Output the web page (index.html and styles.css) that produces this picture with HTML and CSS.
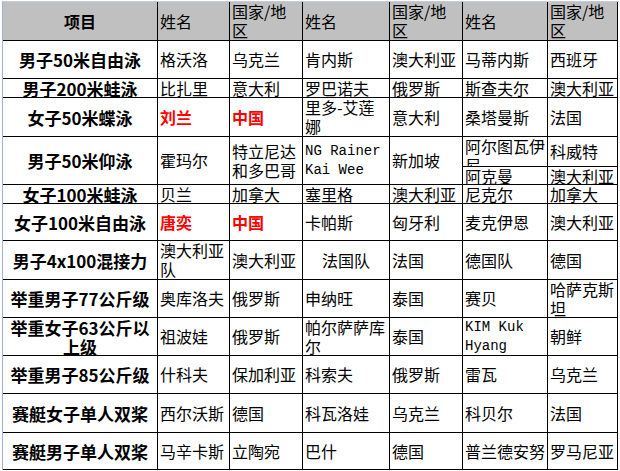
FILE: index.html
```html
<!DOCTYPE html>
<html lang="zh">
<head>
<meta charset="utf-8">
<title>奥运项目</title>
<link rel="stylesheet" href="styles.css">
</head>
<body>
<div class="sheet">
  <div class="grid">
    <div class="c hd ev">项目</div>
    <div class="c hd">姓名</div>
    <div class="c hd">国家/地区</div>
    <div class="c hd">姓名</div>
    <div class="c hd">国家/地区</div>
    <div class="c hd">姓名</div>
    <div class="c hd">国家/地区</div>

    <div class="c ev">男子50米自由泳</div>
    <div class="c">格沃洛</div>
    <div class="c">乌克兰</div>
    <div class="c">肯内斯</div>
    <div class="c">澳大利亚</div>
    <div class="c">马蒂内斯</div>
    <div class="c">西班牙</div>

    <div class="c ev">男子200米蛙泳</div>
    <div class="c">比扎里</div>
    <div class="c">意大利</div>
    <div class="c">罗巴诺夫</div>
    <div class="c">俄罗斯</div>
    <div class="c">斯查夫尔</div>
    <div class="c">澳大利亚</div>

    <div class="c ev">女子50米蝶泳</div>
    <div class="c red">刘兰</div>
    <div class="c red">中国</div>
    <div class="c">里多-艾莲娜</div>
    <div class="c">意大利</div>
    <div class="c">桑塔曼斯</div>
    <div class="c">法国</div>

    <div class="c ev span2">男子50米仰泳</div>
    <div class="c span2">霍玛尔</div>
    <div class="c span2">特立尼达和多巴哥</div>
    <div class="c span2 mono">NG Rainer Kai Wee</div>
    <div class="c span2">新加坡</div>
    <div class="c">阿尔图瓦伊尼</div>
    <div class="c">科威特</div>
    <div class="c">阿克曼</div>
    <div class="c">澳大利亚</div>

    <div class="c ev">女子100米蛙泳</div>
    <div class="c">贝兰</div>
    <div class="c">加拿大</div>
    <div class="c">塞里格</div>
    <div class="c">澳大利亚</div>
    <div class="c">尼克尔</div>
    <div class="c">加拿大</div>

    <div class="c ev">女子100米自由泳</div>
    <div class="c red">唐奕</div>
    <div class="c red">中国</div>
    <div class="c">卡帕斯</div>
    <div class="c">匈牙利</div>
    <div class="c">麦克伊恩</div>
    <div class="c">澳大利亚</div>

    <div class="c ev">男子4x100混接力</div>
    <div class="c">澳大利亚队</div>
    <div class="c">澳大利亚</div>
    <div class="c mid">法国队</div>
    <div class="c">法国</div>
    <div class="c">德国队</div>
    <div class="c">德国</div>

    <div class="c ev">举重男子77公斤级</div>
    <div class="c">奥库洛夫</div>
    <div class="c">俄罗斯</div>
    <div class="c">申纳旺</div>
    <div class="c">泰国</div>
    <div class="c">赛贝</div>
    <div class="c">哈萨克斯坦</div>

    <div class="c ev">举重女子63公斤以上级</div>
    <div class="c">祖波娃</div>
    <div class="c">俄罗斯</div>
    <div class="c">帕尔萨萨库尔</div>
    <div class="c">泰国</div>
    <div class="c mono">KIM Kuk Hyang</div>
    <div class="c">朝鲜</div>

    <div class="c ev">举重男子85公斤级</div>
    <div class="c">什科夫</div>
    <div class="c">保加利亚</div>
    <div class="c">科索夫</div>
    <div class="c">俄罗斯</div>
    <div class="c">雷瓦</div>
    <div class="c">乌克兰</div>

    <div class="c ev">赛艇女子单人双桨</div>
    <div class="c">西尔沃斯</div>
    <div class="c">德国</div>
    <div class="c">科瓦洛娃</div>
    <div class="c">乌克兰</div>
    <div class="c">科贝尔</div>
    <div class="c">法国</div>

    <div class="c ev">赛艇男子单人双桨</div>
    <div class="c">马辛卡斯</div>
    <div class="c">立陶宛</div>
    <div class="c">巴什</div>
    <div class="c">德国</div>
    <div class="c">普兰德安努</div>
    <div class="c">罗马尼亚</div>
  </div>
</div>
</body>
</html>
```

FILE: styles.css
```css
html, body {
  margin: 0;
  padding: 0;
  background: #ffffff;
  overflow: hidden;
}

.sheet {
  margin: 1px 0 0 2px;
  border-top: 1px solid #c3cbdd;
  border-left: 1px solid #9fb0d3;
  width: 616px;
}

.grid {
  display: grid;
  grid-template-columns: 154px 71px 72px 86px 72px 84px 69px;
  grid-template-rows: 38px 37px 18px 38px 29px 17px 18px 36px 38px 37px 37px 37px 38px 36px;
  gap: 1px;
  padding: 0 1px 1px 0;
  background: #000000;
  width: max-content;
}

.c {
  background: #ffffff;
  overflow: hidden;
  display: flex;
  flex-direction: column;
  justify-content: safe center;
  padding: 0 0 0 2px;
  font-family: "Noto Sans CJK SC", "Noto Sans", sans-serif;
  font-size: 16px;
  line-height: 19px;
  color: #000000;
  word-break: break-all;
}

.hd {
  background: #c0c0c0;
}

.ev {
  font-weight: 700;
  font-size: 17px;
  text-align: center;
  padding: 0 4px;
}

.hd.ev {
  font-size: 16px;
}

.red {
  color: #ff0000;
  font-weight: 700;
}

.mid {
  text-align: center;
  padding: 0;
}

.mono {
  font-family: "Liberation Mono", "DejaVu Sans Mono", monospace;
  font-size: 14px;
  word-break: normal;
}

.span2 {
  grid-row: span 2;
}
```
